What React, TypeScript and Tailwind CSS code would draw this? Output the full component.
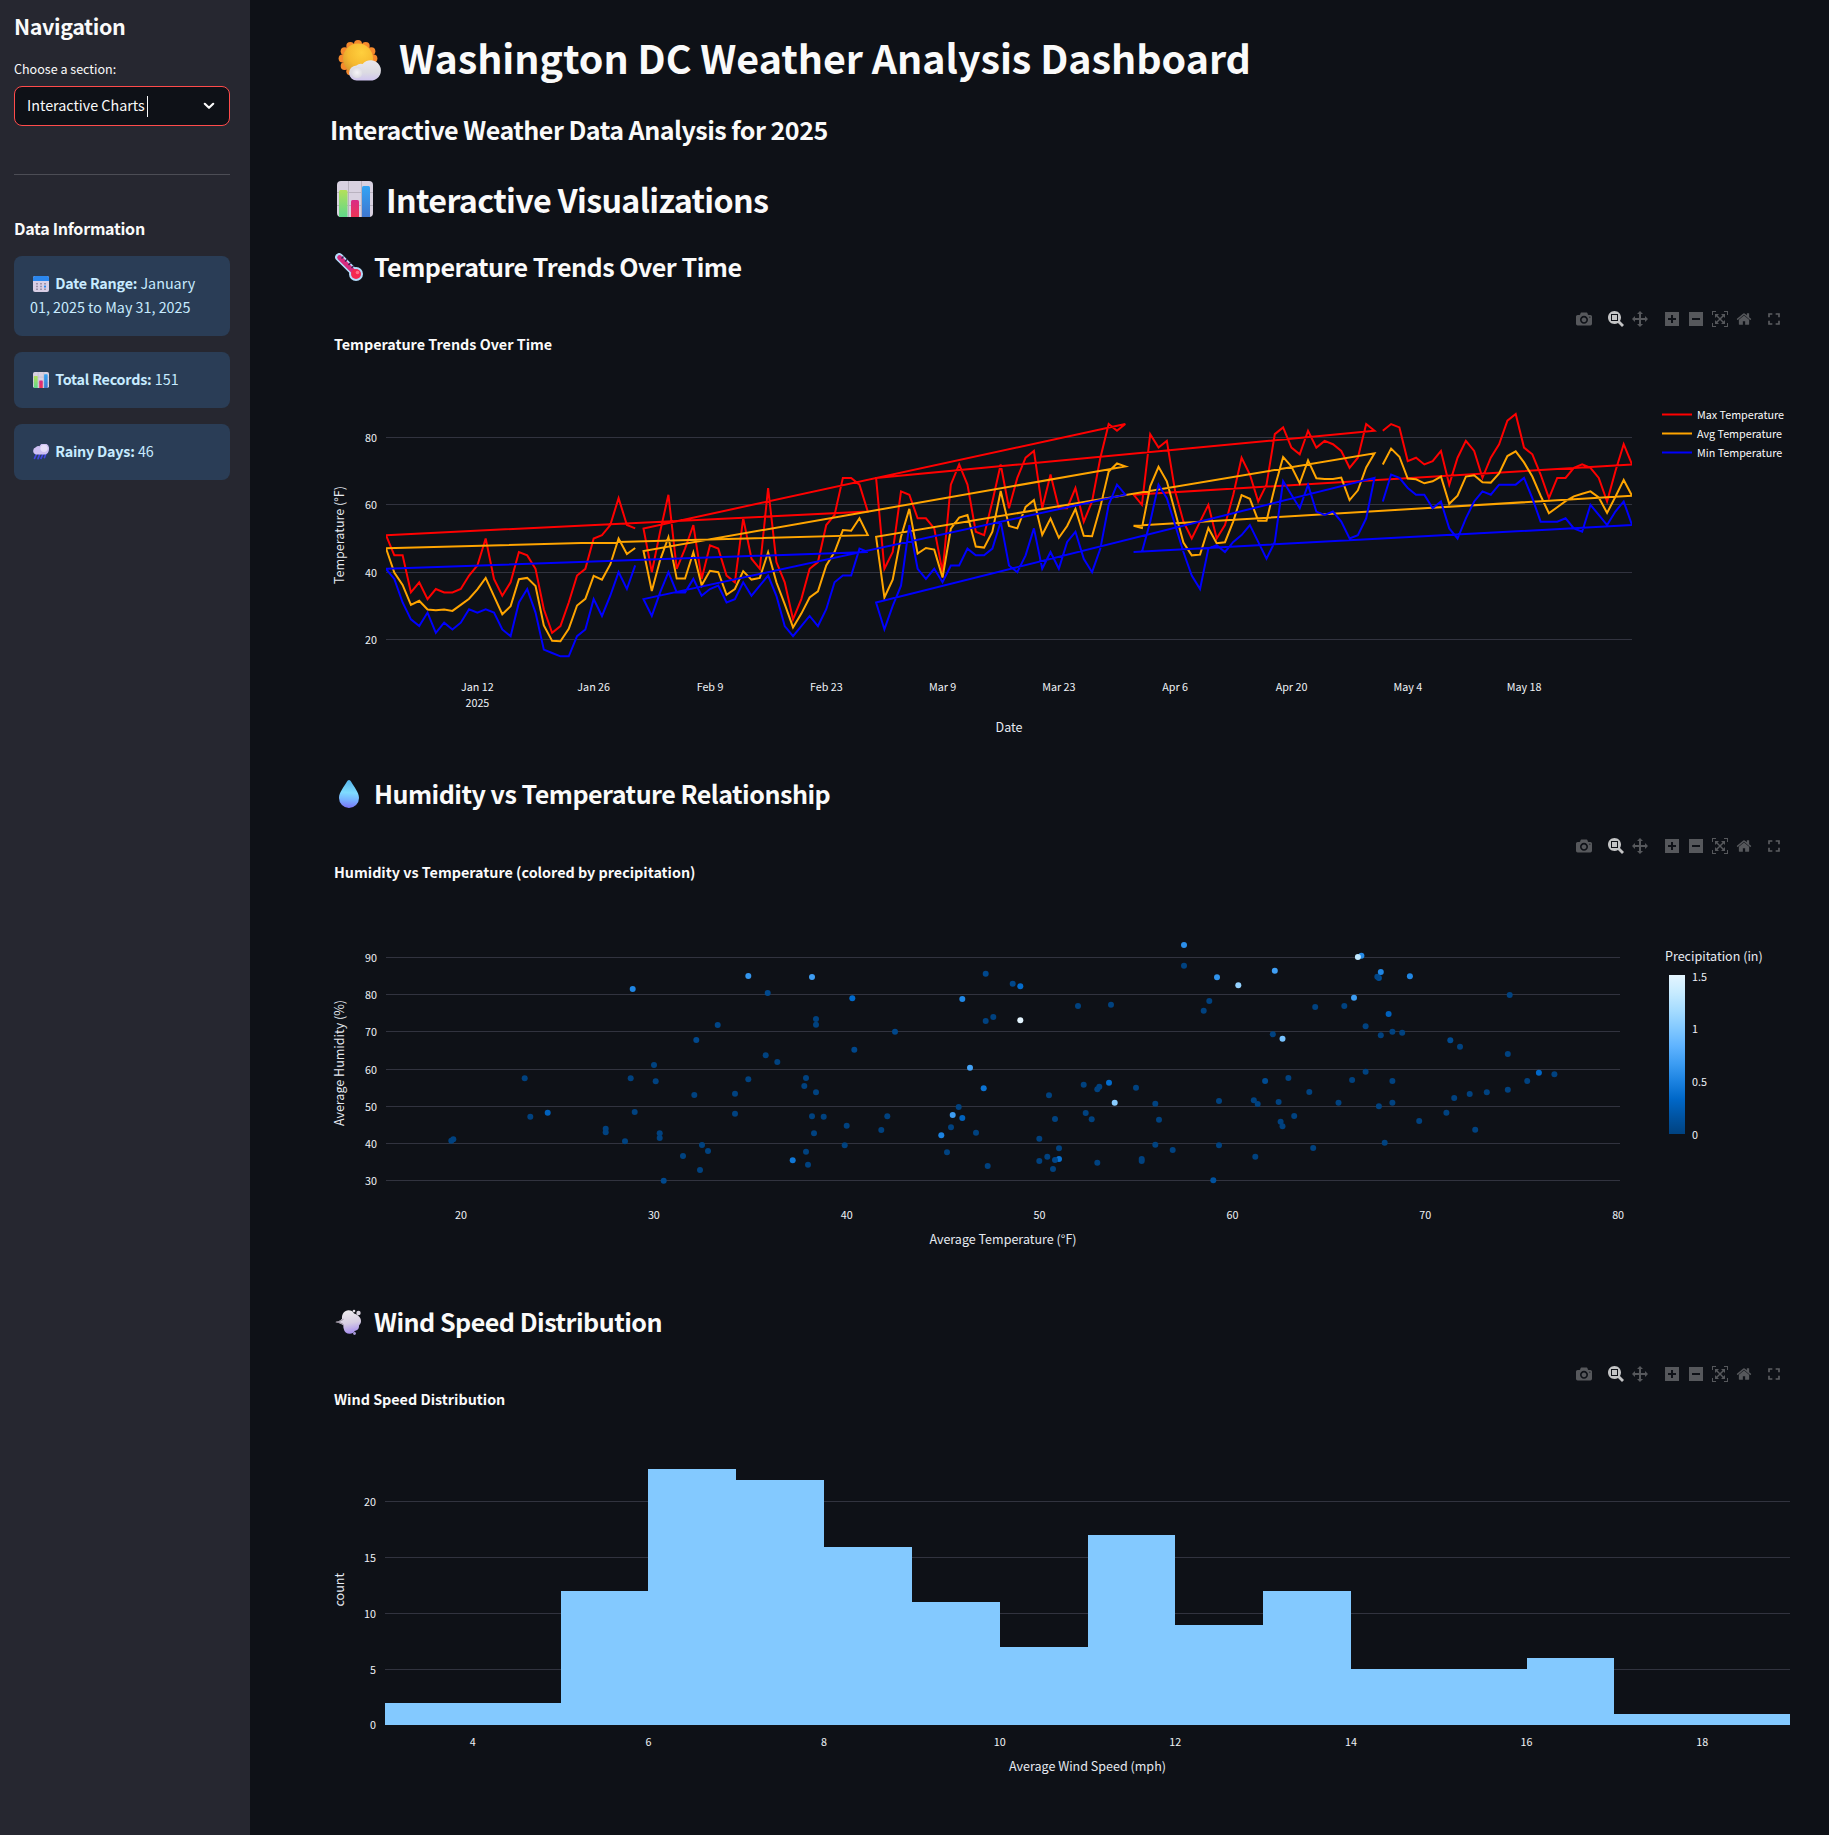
import React from "react";

const FONT = "font-['Noto_Sans_CJK_SC','Source_Sans_3',sans-serif]";

/* ---------- Data ---------- */

const MAX_T = [
  51, 45, 45, 34, 37, 32, 35, 34, 34, 35, 39, 42, 50, 38, 33, 37, 46, 45, 41, 29, 22, 24, 31, 39, 41, 50, 51, 54, 62, 54, 53,
  53, 40, 52, 63, 41, 47, 54, 38, 48, 47, 39, 37, 56, 44, 41, 65, 43, 37, 26, 32, 41, 43, 54, 57, 68, 68, 66, 58,
  68, 41, 46, 64, 63, 56, 56, 53, 40, 66, 72, 66, 52, 51, 61, 72, 59, 68, 74, 76, 59, 69, 59, 59, 65, 55, 61, 74, 84, 82, 84,
  63, 60, 81, 77, 79, 64, 55, 50, 55, 60, 50, 54, 63, 74, 69, 61, 66, 81, 83, 77, 75, 82, 77, 79, 78, 76, 71, 74, 84, 82,
  82, 84, 83, 73, 74, 72, 73, 76, 66, 74, 79, 76, 68, 74, 78, 85, 87, 77, 75, 69, 62, 68, 68, 71, 72, 71, 68, 61, 70, 78, 72,
];

const AVG_T = [
  47.1, 39.9, 36.2, 30.3, 31.5, 28.9, 28.7, 28.9, 28.5, 30.3, 32.1, 34.9, 38.3, 32.9, 27.5, 29.9, 37.9, 38.3, 35.9, 24.2, 19.6, 19.5, 23.2, 30.1, 32.1, 38.9, 37.8, 42.3, 50, 45.4, 47.2,
  46.3, 34.4, 43.6, 50.4, 38.1, 38.1, 45.9, 36.1, 40.4, 40, 33.3, 35, 40.3, 37.8, 38.3, 45.9, 37, 30.5, 23.6, 27.7, 32.5, 34.3, 42, 46, 52.5, 52.3, 56, 51,
  50.5, 32.5, 37.8, 50.5, 58.8, 45.5, 47.2, 46.7, 38.4, 52.9, 56.2, 57, 47.6, 47.3, 52, 64.1, 53.7, 53, 59.4, 61.4, 51.1, 55.9, 50.2, 53.7, 58.8, 50.8, 50.7, 59.4, 69.9, 72.3, 71.4,
  53.8, 53.1, 65.5, 71.3, 67, 57.9, 48.8, 45, 45.2, 53.1, 48.6, 48.9, 55.1, 62.9, 61.8, 55.3, 55.3, 65.3, 74.2, 71.4, 66.4, 73.2, 67.9, 67.7, 67.7, 68.1, 61.4, 64.3, 71.1, 75.3,
  72, 76.7, 74.3, 67.8, 67.6, 66.4, 67, 68.4, 60.3, 62.7, 68.4, 68.8, 66.7, 66.6, 69.3, 74.5, 75.9, 72.6, 68.4, 62.7, 57.5, 59.3, 61.1, 62.5, 63.3, 64, 62.2, 57.6, 62.4, 67.4, 62.7,
];

const MIN_T = [
  41, 38, 31, 26, 24, 28, 22, 25, 23, 25, 29, 28, 29, 28, 23, 21, 31, 35, 28, 17, 16, 15, 15, 21, 23, 32, 27, 33, 40, 35, 42,
  32, 27, 34, 40, 34, 34, 38, 33, 35, 36, 31, 32, 37, 33, 36, 39, 33, 24, 21, 24, 27, 24, 29, 37, 39, 39, 47, 46,
  31, 23, 30, 36, 54, 41, 38, 41, 37, 42, 42, 47, 45, 45, 47, 55, 42, 40, 45, 53, 41, 46, 41, 49, 52, 44, 40, 47, 60, 66, 63,
  46, 46, 55, 66, 62, 54, 46, 39, 35, 47, 48, 46, 49, 51, 54, 49, 44, 49, 67, 63, 59, 66, 58, 57, 58, 55, 50, 51, 56, 68,
  61, 69, 68, 65, 63, 63, 59, 61, 53, 50, 56, 61, 64, 63, 66, 66, 66, 68, 62, 55, 55, 55, 56, 53, 52, 60, 57, 54, 58, 61, 54,
];

/* First and last day index of each month, newest month first. */
const MONTHS = [[120, 150], [90, 119], [59, 89], [31, 58], [0, 30]];

const linePoints = (series: number[]) =>
  MONTHS.flatMap(([from, to]) =>
    series.slice(from, to + 1).map((t, i) => {
      const x = 386 + (from + i) * (1246 / 150);
      const y = 437.5 + (80 - t) * 3.367;
      return `${x.toFixed(2)},${y.toFixed(2)}`;
    }),
  ).join(" ");

type Dot = [number, number, number?];
const DOTS: Dot[] = [
  [451.3, 1140.7], [453.3, 1139.3], [524.7, 1078.3], [530.3, 1116.7], [547.7, 1112.7, 0.27], [605.7, 1128.7], [605.7, 1132.3],
  [625, 1141.3], [630.7, 1078.3], [632.7, 989, 0.52], [634.7, 1112], [654, 1065], [655.7, 1081.3], [659.7, 1133.3], [659.7, 1138],
  [663.7, 1180.7, 0.06], [683, 1156], [694.3, 1095], [696.3, 1040, 0.06], [700, 1170], [702, 1145], [708, 1151], [717.7, 1025, 0.04],
  [735, 1093.7], [735, 1113.7], [748.3, 976, 0.62], [748.3, 1079.3], [765.7, 1055.3], [767.7, 993, 0.06], [777.3, 1062],
  [792.7, 1160.3, 0.42], [804.3, 1086], [806, 1078], [806, 1151.7], [808, 1164.7], [812, 977, 0.67], [812, 1116.3], [814, 1133.3],
  [816, 1019], [816, 1024.7], [816, 1092.3], [823.7, 1116.7], [844.7, 1145.3], [846.7, 1125.7], [852.3, 998.3, 0.34],
  [854.3, 1049.7, 0.05], [881.3, 1130], [887.3, 1116.3], [895, 1031.7, 0.05], [941.3, 1135.3, 0.5], [947, 1152.3], [951, 1127.3],
  [952.7, 1115, 0.67], [958.7, 1107], [962.3, 999, 0.52], [962.3, 1118, 0.28], [970, 1067.7, 0.7], [976, 1132.7], [983.7, 1088.3, 0.4],
  [985.7, 973.7, 0.06], [985.7, 1021], [987.7, 1166], [993.3, 1017], [1012.7, 983.7, 0.05], [1020.3, 986.3, 0.35], [1020.3, 1020.3, 1.5],
  [1039.3, 1138.7], [1039.3, 1161], [1047.3, 1156.7], [1049, 1095.3], [1053, 1169], [1059, 1159, 0.38], [1055, 1160, 0.05],
  [1055, 1119], [1059, 1148.3], [1078, 1006], [1083.7, 1084.7], [1085.7, 1113], [1091.7, 1119.3], [1097.3, 1089.3], [1099.3, 1086.7],
  [1097.3, 1162.7], [1109, 1082.7, 0.35], [1111, 1004.7], [1114.7, 1102.7, 1.03], [1136, 1087.7], [1141.7, 1159], [1141.7, 1161],
  [1155.3, 1103.7], [1155.3, 1144.7], [1159, 1119.7], [1172.7, 1150], [1184, 945, 0.58], [1184, 965.7], [1203.7, 1010.7],
  [1209.3, 1001], [1213.3, 1180.3, 0.14], [1217, 977.3, 0.6], [1219, 1101], [1219, 1145.3], [1238.3, 985.3, 1.08], [1253.8, 1100.3],
  [1257.7, 1104], [1255.3, 1156.7], [1265.1, 1081, 0.08], [1272.8, 1034.3], [1274.8, 970.7, 0.68], [1282.5, 1038.7, 0.95],
  [1278.6, 1102], [1280.6, 1121.7], [1282.5, 1126.3], [1288.4, 1078], [1294.2, 1116], [1309.3, 1092], [1313.2, 1148], [1315.2, 1007],
  [1338.5, 1102.7], [1344.3, 1006], [1352.1, 1080], [1354, 997.7, 0.66], [1361.4, 955.7, 0.55], [1357.9, 957, 1.3], [1365.6, 1026.3],
  [1365.6, 1071.7], [1378.9, 978, 0.1], [1377.3, 976.7, 0.04], [1380.8, 972, 0.52], [1380.8, 1035.3], [1378.9, 1106.3],
  [1384.7, 1142.7], [1388.6, 1014, 0.27], [1392.4, 1031.7], [1392.4, 1081], [1392.4, 1102.7], [1402.2, 1032.7], [1409.9, 976.3, 0.52],
  [1419.2, 1121], [1446.4, 1112.7], [1450.3, 1040.3, 0.08], [1454.2, 1098], [1460, 1046.7], [1469.7, 1094], [1475.2, 1129.7],
  [1486.8, 1092.3], [1507.8, 1054], [1507.8, 1089.7], [1509.7, 995], [1527.2, 1081], [1538.9, 1072.7, 0.32], [1554.4, 1074.3],
];

const SCALE = ["#004280", "#0054a3", "#0068c9", "#1c83e1", "#3d9df3", "#60b4ff", "#83c9ff", "#a6dcff", "#c7ebff", "#e4f5ff"];

function scaleColor(v: number) {
  const p = Math.min(v / 1.5, 1) * 9;
  const i = Math.min(Math.floor(p), 8);
  const f = p - i;
  const ch = (c: string, k: number) => parseInt(c.slice(1 + k * 2, 3 + k * 2), 16);
  const mix = [0, 1, 2].map((k) => Math.round(ch(SCALE[i], k) * (1 - f) + ch(SCALE[i + 1], k) * f));
  return `rgb(${mix.join(",")})`;
}

/* Bar left edge, right edge, top. */
const BARS = [
  [385, 561, 1703], [561, 648, 1591], [648, 736, 1469], [736, 824, 1480], [824, 912, 1547], [912, 1000, 1602], [1000, 1088, 1647],
  [1088, 1175, 1535], [1175, 1263, 1625], [1263, 1351, 1591], [1351, 1527, 1669], [1527, 1614, 1658], [1614, 1790, 1714],
];

/* ---------- Emoji style icons ---------- */

function SunCloud() {
  const petals = Array.from({ length: 12 }, (_, i) => {
    const a = (i * Math.PI) / 6;
    return [20 + 15.4 * Math.sin(a), 18.6 - 14.6 * Math.cos(a)];
  });
  return (
    <svg className="shrink-0" width="44" height="41" viewBox="0 0 44 41">
      <defs>
        <radialGradient id="sun" cx="0.62" cy="0.3" r="0.75"><stop offset="0" stopColor="#ffcf3d" /><stop offset="0.6" stopColor="#f6b92f" /><stop offset="1" stopColor="#d99a2e" /></radialGradient>
        <linearGradient id="cloud" x1="0" y1="0" x2="0" y2="1"><stop offset="0" stopColor="#e9e8ee" /><stop offset="0.6" stopColor="#dcdbe2" /><stop offset="1" stopColor="#cfc4ef" /></linearGradient>
        <radialGradient id="puff"><stop offset="0" stopColor="#f6f5f8" /><stop offset="1" stopColor="#dddce3" /></radialGradient>
      </defs>
      {petals.map(([x, y], i) => <circle key={i} cx={x} cy={y} r="4" fill="#f58a2c" />)}
      <circle cx="20" cy="18.6" r="15" fill="url(#sun)" />
      <path d="M19 40.6a7.6 7.6 0 0 1-.6-15.2 7 7 0 0 1 6.200-1.400A10.300 10.300 0 1 1 34.500 40.600Z" fill="url(#cloud)" />
      <circle cx="19" cy="32.500" r="5.500" fill="url(#puff)" />
    </svg>
  );
}

function ChartEmoji({ size, className = "" }: { size: number; className?: string }) {
  return (
    <svg className={`shrink-0 ${className}`} width={size} height={size} viewBox="0 0 36 36">
      <defs>
        <linearGradient id="bg1" x1="0" y1="0" x2="0" y2="1"><stop offset="0" stopColor="#b4e05a" /><stop offset="1" stopColor="#5fd88a" /></linearGradient>
        <linearGradient id="bp1" x1="0" y1="0" x2="0" y2="1"><stop offset="0" stopColor="#d92b86" /><stop offset="1" stopColor="#ec3556" /></linearGradient>
        <linearGradient id="bb1" x1="0" y1="0" x2="0" y2="1"><stop offset="0" stopColor="#33a4f5" /><stop offset="1" stopColor="#3f77cf" /></linearGradient>
      </defs>
      <rect width="36" height="36" rx="4" fill="#d8d1e0" />
      <path d="M11.500 0V36M24.500 0V36M0 11.500H36M0 24.500H36" stroke="#b9b2c0" strokeWidth="1" />
      <path d="M2 36V10.500a1.500 1.500 0 0 1 1.500-1.500h5.500a1.500 1.500 0 0 1 1.500 1.500V36Z" fill="url(#bg1)" />
      <path d="M14 36V20.500a1.500 1.500 0 0 1 1.500-1.500h5a1.500 1.500 0 0 1 1.500 1.500V36Z" fill="url(#bp1)" />
      <path d="M25 36V6.500a1.500 1.500 0 0 1 1.500-1.500h5a1.500 1.500 0 0 1 1.500 1.500V36Z" fill="url(#bb1)" />
    </svg>
  );
}

function Thermometer() {
  return (
    <svg className="shrink-0" width="28" height="28" viewBox="0 0 28 28">
      <path d="M4.200 4.200L20 20" stroke="#b4dcfb" strokeWidth="8" strokeLinecap="round" />
      <circle cx="21" cy="21" r="7" fill="#b4dcfb" />
      <path d="M4.500 4.500L19 19" stroke="#d62b7e" strokeWidth="4.600" strokeLinecap="round" />
      <circle cx="21" cy="21" r="5" fill="#f5284f" />
      <circle cx="22.500" cy="19.500" r="1.800" fill="#ff6f86" />
      <path d="M6.500 5.500l2-2M10 8.500l2.200-2.200M13.500 12l2.200-2.200M16.500 15l2-2" stroke="#3b2350" strokeWidth="1.500" />
    </svg>
  );
}

function Droplet() {
  return (
    <svg className="shrink-0" width="20" height="28" viewBox="0 0 20 28">
      <defs>
        <linearGradient id="drop" x1="0.500" y1="0" x2="0.450" y2="1"><stop offset="0" stopColor="#55b4ea" /><stop offset="0.450" stopColor="#7fdcff" /><stop offset="0.700" stopColor="#78b4ff" /><stop offset="1" stopColor="#7a74f8" /></linearGradient>
      </defs>
      <path d="M10 0c1 0 1.500.8 2 1.600C15 7 20 12.500 20 18a10 10 0 0 1-20 0C0 12.500 5 7 8 1.600 8.500.8 9 0 10 0Z" fill="url(#drop)" />
    </svg>
  );
}

function WindPuff() {
  return (
    <svg className="shrink-0" width="27" height="26" viewBox="0 0 27 26">
      <defs>
        <linearGradient id="wind" x1="0.400" y1="0" x2="0.600" y2="1"><stop offset="0" stopColor="#eeecef" /><stop offset="0.550" stopColor="#d6cde2" /><stop offset="1" stopColor="#a68df0" /></linearGradient>
      </defs>
      <path d="M0 13c3-.3 5-1 7-3.200C6.500 5 9.500 1.300 13.500 1.300c2.500 0 4.500 1.200 5.500 3.200 3.500 1 7 3.500 7 7.500 0 2-.8 3.400-2 4.500.3 3.500-2 5-4 5.300-1.200 2-3 3-5.200 3-3.300 0-5.500-2-6-4.800C8 17.500 8.500 17 8.500 16.500 6 14.500 3 13.600 0 13Z" fill="url(#wind)" />
      <path d="M1 13c3-.3 5-1 7.500-2.800M2 13.300c3 .3 4.500.9 6.500 2.200" stroke="#8f8794" strokeWidth="0.900" fill="none" />
      <circle cx="19" cy="2" r="1.300" fill="#dcd8e0" />
      <circle cx="23.500" cy="4" r="2.200" fill="#d8d2de" />
      <circle cx="19.500" cy="24.500" r="1.400" fill="#a99bd8" />
    </svg>
  );
}

function Calendar() {
  return (
    <svg className="mx-[3px] inline-block align-[-3px]" width="16" height="16" viewBox="0 0 16 16">
      <rect y="0" width="16" height="16" rx="2" fill="#d9cfe6" />
      <path d="M0 5V2a2 2 0 0 1 2-2h12a2 2 0 0 1 2 2v3Z" fill="#2b87ee" />
      <path d="M3 7h2v1.500H3zM7 7h2v1.500H7zM11 7h2v1.500h-2zM3 9.800h2v1.500H3zM7 9.800h2v1.500H7zM3 12.500h2V14H3zM7 12.500h2V14H7zM11 12.500h2V14h-2z" fill="#9c92ab" />
      <rect x="11" y="9.600" width="2" height="1.900" fill="#2b87ee" />
    </svg>
  );
}

function RainCloud() {
  return (
    <svg className="mx-[3px] inline-block align-[-3px]" width="16" height="16" viewBox="0 0 16 16">
      <path d="M3.500 10L1.500 14.300M6.800 10L5 14.600M10 10L8 14.300M13 9.500L11.500 13.500" stroke="#4246e0" strokeWidth="1.700" strokeLinecap="round" />
      <path d="M3 10.600A3.800 3.800 0 0 1 2.800 3.300 4 4 0 0 1 6.500 2.200 5 5 0 0 1 16 4.800c0 3.300-1.600 5.800-4.500 5.800Z" fill="#cdbff2" />
      <circle cx="11" cy="4.300" r="3.600" fill="#e6def8" />
    </svg>
  );
}

/* ---------- Chart toolbar ---------- */

const ICONS = {
  camera: "m500 450c-83 0-150-67-150-150 0-83 67-150 150-150 83 0 150 67 150 150 0 83-67 150-150 150z m400 150h-120c-16 0-34 13-39 29l-31 93c-6 15-23 28-40 28h-340c-16 0-34-13-39-28l-31-94c-6-15-23-28-40-28h-120c-55 0-100-45-100-100v-450c0-55 45-100 100-100h800c55 0 100 45 100 100v450c0 55-45 100-100 100z m-400-550c-138 0-250 112-250 250 0 138 112 250 250 250 138 0 250-112 250-250 0-138-112-250-250-250z m365 380c-19 0-35 16-35 35 0 19 16 35 35 35 19 0 35-16 35-35 0-19-16-35-35-35z",
  zoom: "m1000-25l-250 251c40 63 63 138 63 218 0 224-182 406-407 406-224 0-406-182-406-406s183-406 407-406c80 0 155 22 218 62l250-250 125 125z m-812 250l0 438 437 0 0-438-437 0z m62 375l313 0 0-312-313 0 0 312z",
  pan: "m1000 350l-187 188 0-125-250 0 0 250 125 0-188 187-187-187 125 0 0-250-250 0 0 125-188-188 186-187 0 125 252 0 0-250-125 0 187-188 188 188-125 0 0 250 250 0 0-126 187 188z",
  plus: "m1 787l0-875 875 0 0 875-875 0z m687-500l-187 0 0-187-125 0 0 187-188 0 0 125 188 0 0 187 125 0 0-187 187 0 0-125z",
  minus: "m0 788l0-876 876 0 0 876-876 0z m688-500l-500 0 0 125 500 0 0-125z",
  autoscale: "m250 850l-187 0-63 0 0-62 0-188 63 0 0 188 187 0 0 62z m688 0l-188 0 0-62 188 0 0-188 62 0 0 188 0 62-62 0z m-875-938l0 188-63 0 0-188 0-62 63 0 187 0 0 62-187 0z m875 188l0-188-188 0 0-62 188 0 62 0 0 62 0 188-62 0z m-125 188l-1 0-93-94-156 156 156 156 92-93 2 0 0 250-250 0 0-2 93-92-156-156-156 156 94 92 0 2-250 0 0-250 0 0 93 93 157-156-157-156-93 94 0 0 0-250 250 0 0 0-94 93 156 157 156-157-93-93 0 0 250 0 0 250z",
  home: "m786 296v-267q0-15-11-26t-25-10h-214v214h-143v-214h-214q-15 0-25 10t-11 26v267q0 1 0 2t0 2l321 264 321-264q1-1 1-4z m124 39l-34-41q-5-5-12-6h-2q-7 0-12 3l-386 322-386-322q-7-4-13-4-7 2-12 7l-35 41q-4 5-3 13t6 12l401 334q18 15 42 15t43-15l136-114v109q0 8 5 13t13 5h107q8 0 13-5t5-13v-227l122-102q5-5 6-12t-4-13z",
};

function BarIcon({ name, width = 1000, active = false }: { name: keyof typeof ICONS; width?: number; active?: boolean }) {
  return (
    <svg className={active ? "text-[#c3c4c5]" : "text-[#56585c]"} width="16" height="16" viewBox={`0 0 ${width} 1000`}>
      <path transform="matrix(1 0 0 -1 0 850)" d={ICONS[name]} fill="currentColor" />
    </svg>
  );
}

function ModeBar() {
  return (
    <div className="flex h-6 items-center justify-end gap-4 pr-[45px]">
      <BarIcon name="camera" />
      <div className="flex gap-2">
        <BarIcon name="zoom" active />
        <BarIcon name="pan" />
      </div>
      <div className="flex gap-2">
        <BarIcon name="plus" width={875} />
        <BarIcon name="minus" width={875} />
        <BarIcon name="autoscale" />
        <BarIcon name="home" width={928.6} />
      </div>
      <svg className="-ml-1 text-[#5c5e62]" width="20" height="20" viewBox="0 0 24 24">
        <path d="M7 14H5v5h5v-2H7v-3zm-2-4h2V7h3V5H5v5zm12 7h-3v2h5v-5h-2v3zM14 5v2h3v3h2V5h-5z" fill="currentColor" />
      </svg>
    </div>
  );
}

/* ---------- Charts ---------- */

const TICK = "fill-[#eef1f6] text-[10.75px]";
const LABEL = "fill-[#e6eaf1] text-[12.54px]";

function Plot({ top, children }: { top: number; children: React.ReactNode }) {
  return (
    <svg className="block" width="1499" height="400" viewBox={`330 ${top} 1499 400`}>
      {children}
    </svg>
  );
}

function Grid({ rows, x2, x1 = 386 }: { rows: number[]; x2: number; x1?: number }) {
  return (
    <>
      {rows.map((y) => <path key={y} d={`M${x1} ${y}H${x2}`} stroke="#31333f" strokeWidth="1" />)}
    </>
  );
}

function TemperatureChart() {
  const dates = ["Jan 12", "Jan 26", "Feb 9", "Feb 23", "Mar 9", "Mar 23", "Apr 6", "Apr 20", "May 4", "May 18"];
  const series: [string, string, number[]][] = [
    ["Max Temperature", "#ff0000", MAX_T],
    ["Avg Temperature", "#ffa500", AVG_T],
    ["Min Temperature", "#0000ff", MIN_T],
  ];
  const rows: [number, number][] = [[80, 437.5], [60, 504.5], [40, 572.5], [20, 639.5]];
  return (
    <Plot top={354}>
      <clipPath id="area"><rect x="386" y="400" width="1246" height="270" /></clipPath>
      <Grid rows={rows.map((r) => r[1])} x2={1632} />
      {rows.map(([v, y]) => <text key={v} x="377" y={y + 4.200} textAnchor="end" className={TICK}>{v}</text>)}
      <g clipPath="url(#area)">
        {series.map(([name, color, data]) => (
          <polyline key={name} points={linePoints(data)} fill="none" stroke={color} strokeWidth="2" />
        ))}
      </g>
      {dates.map((d, i) => (
        <text key={d} x={477.400 + i * 116.300} y="691" textAnchor="middle" className={TICK}>{d}</text>
      ))}
      <text x="477.400" y="707" textAnchor="middle" className={TICK}>2025</text>
      <text x="1009" y="732" textAnchor="middle" className={LABEL}>Date</text>
      <text transform="translate(344.300 535) rotate(-90)" textAnchor="middle" className={LABEL}>Temperature (°F)</text>
      {series.map(([name, color], i) => (
        <g key={name}>
          <path d={`M1662 ${414.500 + i * 19}h30`} stroke={color} strokeWidth="2" />
          <text x="1697" y={419 + i * 19} className="fill-[#fafafa] text-[10.75px]">{name}</text>
        </g>
      ))}
    </Plot>
  );
}

function HumidityChart() {
  const rows = [957.5, 994.5, 1031.5, 1069.5, 1106.5, 1143.5, 1180.5];
  return (
    <Plot top={881}>
      <defs>
        <linearGradient id="precip" x1="0" y1="1" x2="0" y2="0">
          {SCALE.map((c, i) => <stop key={c} offset={i / 9} stopColor={c} />)}
        </linearGradient>
      </defs>
      <Grid rows={rows} x2={1620} />
      {rows.map((y, i) => <text key={y} x="377" y={y + 4.200} textAnchor="end" className={TICK}>{90 - i * 10}</text>)}
      {DOTS.map(([x, y, p = 0], i) => <circle key={i} cx={x} cy={y} r="3" fill={scaleColor(p)} />)}
      {[20, 30, 40, 50, 60, 70, 80].map((t, i) => (
        <text key={t} x={461 + i * 192.850} y="1219" textAnchor="middle" className={TICK}>{t}</text>
      ))}
      <text x="1003" y="1244" textAnchor="middle" className={LABEL}>Average Temperature (°F)</text>
      <text transform="translate(344.300 1063) rotate(-90)" textAnchor="middle" className={LABEL}>Average Humidity (%)</text>
      <text x="1665" y="961" className={LABEL}>Precipitation (in)</text>
      <rect x="1669" y="975" width="16" height="159" fill="url(#precip)" />
      {[[1.5, 981], [1, 1033], [0.5, 1086], [0, 1139]].map(([v, y]) => (
        <text key={v} x="1692" y={y} className={TICK}>{v}</text>
      ))}
    </Plot>
  );
}

function WindChart() {
  return (
    <Plot top={1409}>
      <Grid rows={[1501.5, 1557.5, 1613.5, 1669.5]} x1={385} x2={1790} />
      {[[20, 1501.5], [15, 1557.5], [10, 1613.5], [5, 1669.5], [0, 1725]].map(([v, y]) => (
        <text key={v} x="376" y={y + 4} textAnchor="end" className={TICK}>{v}</text>
      ))}
      {BARS.map(([x1, x2, y]) => <rect key={x1} x={x1} y={y} width={x2 - x1} height={1725 - y} fill="#83c9ff" />)}
      {[4, 6, 8, 10, 12, 14, 16, 18].map((v, i) => (
        <text key={v} x={472.800 + i * 175.630} y="1745.500" textAnchor="middle" className={TICK}>{v}</text>
      ))}
      <text x="1087.500" y="1771" textAnchor="middle" className={LABEL}>Average Wind Speed (mph)</text>
      <text transform="translate(344.300 1589.700) rotate(-90)" textAnchor="middle" className={LABEL}>count</text>
    </Plot>
  );
}

type SectionProps = { icon: React.ReactNode; title: string; caption: string; className: string; captionClass?: string; children: React.ReactNode };

function Section({ icon, title, caption, className, captionClass = "", children }: SectionProps) {
  return (
    <section className={className}>
      <h3 className="flex h-10 items-center text-[25.07px] leading-none font-semibold tracking-[-0.02em]">
        <span className="flex w-11 items-center justify-start pl-[5px]">{icon}</span>
        {title}
      </h3>
      <div className="mt-5"><ModeBar /></div>
      <div className={`mt-[3px] flex h-5 items-center pl-1 text-[14.33px] leading-none font-bold ${captionClass}`}>{caption}</div>
      {children}
    </section>
  );
}

/* ---------- Page ---------- */

function InfoBox({ icon, label, children }: { icon: React.ReactNode; label: string; children: React.ReactNode }) {
  return (
    <div className="mt-4 rounded-lg bg-[#2a3d56] px-4 pt-[15px] pb-[17px] text-[14.33px] leading-6 text-[#c7ebff]">
      {icon} <b className="tracking-[-0.015em]">{label}</b> {children}
    </div>
  );
}

function Sidebar() {
  return (
    <aside className="flex w-[250px] shrink-0 flex-col bg-[#262730] pr-5 pl-[14px]">
      <h2 className="mt-[10px] flex h-8 items-center text-[21.5px] leading-none font-semibold tracking-[-0.018em]">Navigation</h2>
      <label className="mt-[17px] flex h-5 items-center text-[12.54px] leading-none">Choose a section:</label>
      <div className="mt-[7px] flex h-10 items-center rounded-lg border border-[#ff4b4b] bg-[#0e1117] pr-3 pl-3">
        <span className="pb-0.5 text-[14.33px] leading-none">Interactive Charts</span>
        <span className="ml-0.5 h-[21px] w-px bg-[#fafafa]" />
        <svg className="ml-auto" width="16" height="16" viewBox="0 0 16 16">
          <path d="M3.800 5.800L8 9.800L12.200 5.800" fill="none" stroke="#fafafa" strokeWidth="2.200" strokeLinejoin="round" strokeLinecap="round" />
        </svg>
      </div>
      <div className="mt-12 h-px bg-[#4c4d55]" />
      <h3 className="mt-[42px] mb-px flex h-[22px] items-center text-[16.1px] leading-none font-semibold tracking-[-0.018em]">Data Information</h3>
      <InfoBox icon={<Calendar />} label="Date Range:">
        <span>January</span> <span>01, 2025 to May 31, 2025</span>
      </InfoBox>
      <InfoBox icon={<ChartEmoji size={16} className="mx-[3px] inline-block align-[-3px]" />} label="Total Records:">151</InfoBox>
      <InfoBox icon={<RainCloud />} label="Rainy Days:">46</InfoBox>
    </aside>
  );
}

export default function App() {
  return (
    <div className={`flex h-[1835px] w-[1829px] overflow-hidden bg-[#0e1117] text-[#fafafa] ${FONT}`}>
      <Sidebar />
      <main className="flex-1 pl-20">
        <h1 className="flex h-28 items-center pt-0.5 pl-2 text-[39.4px] leading-none font-bold">
          <span className="mt-[7px] mr-[17px] flex"><SunCloud /></span>
          <span className="tracking-[-0.03px]">Washington DC Weather Analysis Dashboard</span>
        </h1>
        <h3 className="flex h-9 items-center text-[25.07px] leading-none font-semibold tracking-[-0.0205em]">Interactive Weather Data Analysis for 2025</h3>
        <h2 className="mt-[31px] flex h-10 items-center pl-[7px] text-[32.24px] leading-none font-semibold tracking-[-0.02em]">
          <span className="mr-[13px] flex"><ChartEmoji size={36} /></span>
          Interactive Visualizations
        </h2>
        <Section icon={<Thermometer />} title="Temperature Trends Over Time" caption="Temperature Trends Over Time" className="mt-7 h-[527px]">
          <TemperatureChart />
        </Section>
        <Section icon={<span className="pl-1"><Droplet /></span>} title="Humidity vs Temperature Relationship" caption="Humidity vs Temperature (colored by precipitation)" className="h-[528px]" captionClass="pt-0.5">
          <HumidityChart />
        </Section>
        <Section icon={<WindPuff />} title="Wind Speed Distribution" caption="Wind Speed Distribution" className="h-[528px]">
          <WindChart />
        </Section>
      </main>
    </div>
  );
}
